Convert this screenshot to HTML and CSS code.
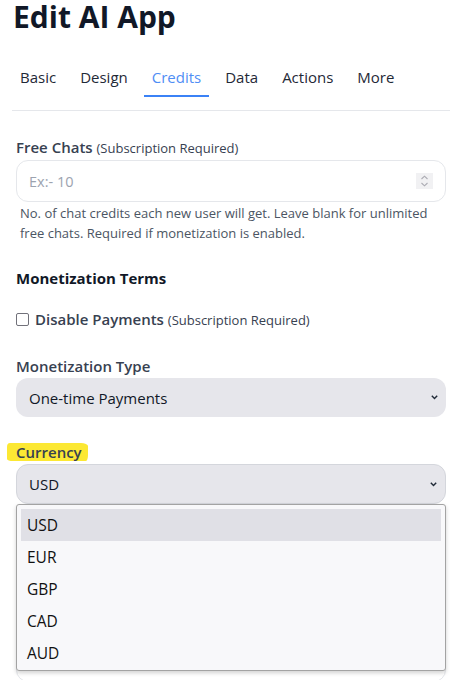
FILE: index.html
```html
<!DOCTYPE html>
<html lang="en">
<head>
<meta charset="utf-8">
<title>Edit AI App</title>
<link rel="stylesheet" href="styles.css">
</head>
<body>
<div class="page">
  <h1 class="title">Edit AI App</h1>
  <nav class="tabs">
    <a class="tab">Basic</a>
    <a class="tab">Design</a>
    <a class="tab active">Credits</a>
    <a class="tab">Data</a>
    <a class="tab">Actions</a>
    <a class="tab">More</a>
  </nav>
  <div class="rule"></div>
  <form class="form">
    <div class="field first">
      <label class="label">Free Chats <span class="note">(Subscription Required)</span></label>
      <div class="input">
        <span class="placeholder">Ex:- 10</span>
        <svg class="spinner" width="17" height="16" viewBox="0 0 17 16"><rect width="17" height="16" fill="#f1f1f3"/><path d="M5.5 6 L8.5 3.2 L11.5 6" fill="none" stroke="#acacb4" stroke-width="1.1"/><path d="M5.5 10 L8.5 12.8 L11.5 10" fill="none" stroke="#acacb4" stroke-width="1.1"/></svg>
      </div>
      <p class="help">No. of chat credits each new user will get. Leave blank for unlimited<br>free chats. Required if monetization is enabled.</p>
    </div>
    <h2 class="section">Monetization Terms</h2>
    <label class="check"><span class="box"></span><span class="check-text">Disable Payments <span class="note">(Subscription Required)</span></span></label>
    <div class="field">
      <label class="label">Monetization Type</label>
      <div class="select">
        <span>One-time Payments</span>
        <svg class="chev" width="7" height="5" viewBox="0 0 7 5"><path d="M0.8 0.8 L3.5 3.6 L6.2 0.8" fill="none" stroke="#1f2937" stroke-width="1.4"/></svg>
      </div>
    </div>
    <div class="field currency">
      <label class="label"><span class="marker">Currency</span></label>
      <div class="select-wrap">
        <div class="select open">
          <span>USD</span>
          <svg class="chev" width="7" height="5" viewBox="0 0 7 5"><path d="M0.8 0.8 L3.5 3.6 L6.2 0.8" fill="none" stroke="#1f2937" stroke-width="1.4"/></svg>
        </div>
        <ul class="menu">
          <li class="sel">USD</li>
          <li>EUR</li>
          <li>GBP</li>
          <li>CAD</li>
          <li>AUD</li>
        </ul>
      </div>
    </div>
    <div class="field trailing">
      <div class="textarea"></div>
    </div>
  </form>
</div>
</body>
</html>
```

FILE: styles.css
```css
body {
  margin: 0;
  background: #ffffff;
  font-family: "Open Sans", "Noto Sans", sans-serif;
  color: #111827;
}

.page {
  padding: 0 12px;
}

.title {
  margin: 0;
  padding-left: 1px;
  font-size: 30px;
  font-weight: 700;
  line-height: 33px;
  color: #111827;
}

.tabs {
  display: flex;
  gap: 8px;
  margin-top: 24px;
}

.tab {
  padding: 8px 8px 6px;
  font-size: 15px;
  line-height: 24px;
  color: #1f2937;
  border-bottom: 2px solid transparent;
}

.tab.active {
  color: #4f8ef5;
  border-bottom-color: #3b82f6;
}

.rule {
  height: 1px;
  margin-top: 13px;
  background: #e5e7eb;
}

.form {
  padding: 0 4px;
}

.field {
  margin-top: 26px;
}

.field.currency {
  margin-top: 25px;
}

.field.trailing {
  margin-top: 47px;
}

.label {
  display: block;
  margin-bottom: 2px;
  font-size: 15px;
  font-weight: 600;
  line-height: 20px;
  color: #374151;
}

.note {
  font-size: 13px;
  font-weight: 400;
}

.input {
  display: flex;
  align-items: center;
  justify-content: space-between;
  box-sizing: border-box;
  height: 42px;
  padding: 0 12px 0 12px;
  border: 1px solid #e5e7eb;
  border-radius: 12px;
  background: #ffffff;
}

.placeholder {
  font-size: 14.5px;
  color: #9ca3af;
}

.spinner {
  display: block;
}

.help {
  margin: 1px 0 0;
  padding-left: 4px;
  font-size: 13px;
  line-height: 20px;
  color: #4b5563;
}

.section {
  margin: 25px 0 0;
  font-size: 15px;
  font-weight: 700;
  line-height: 20px;
  color: #111827;
}

.check {
  display: flex;
  align-items: center;
  gap: 6px;
  margin-top: 21px;
  font-size: 15px;
  font-weight: 600;
  line-height: 20px;
  color: #374151;
}

.box {
  width: 13px;
  height: 13px;
  box-sizing: border-box;
  border: 1.5px solid #71717a;
  border-radius: 2px;
  background: #ffffff;
}

.select {
  display: flex;
  align-items: center;
  justify-content: space-between;
  box-sizing: border-box;
  height: 39px;
  padding: 0 8px 0 13px;
  border-radius: 12px;
  background: #e6e6eb;
  font-size: 15px;
  color: #111827;
}

.chev {
  display: block;
}

.select.open {
  height: 40px;
  padding-left: 12px;
  border: 1px solid #d4d6dc;
}

.select-wrap {
  position: relative;
}

.marker {
  display: inline-block;
  margin-left: -9px;
  padding: 0 6px 0 9px;
  background: #fce833;
  border-radius: 3px 7px 2px 6px / 4px 3px 6px 2px;
  line-height: 18px;
}

.menu {
  position: absolute;
  top: 100%;
  left: 0;
  right: 0;
  z-index: 2;
  margin: 0;
  padding: 4px 4px 1px;
  list-style: none;
  background: #f8f8fa;
  border: 1px solid #a3a3a3;
  border-radius: 3px;
  box-shadow: 0 2px 4px rgba(0, 0, 0, 0.18);
}

.menu li {
  height: 32px;
  padding-left: 6px;
  font-size: 15.5px;
  line-height: 32px;
  color: #111111;
}

.menu li.sel {
  background: #e0e0e6;
}

.textarea {
  box-sizing: border-box;
  height: 131px;
  border: 1px solid #e5e7eb;
  border-radius: 12px;
  background: #ffffff;
}
```
